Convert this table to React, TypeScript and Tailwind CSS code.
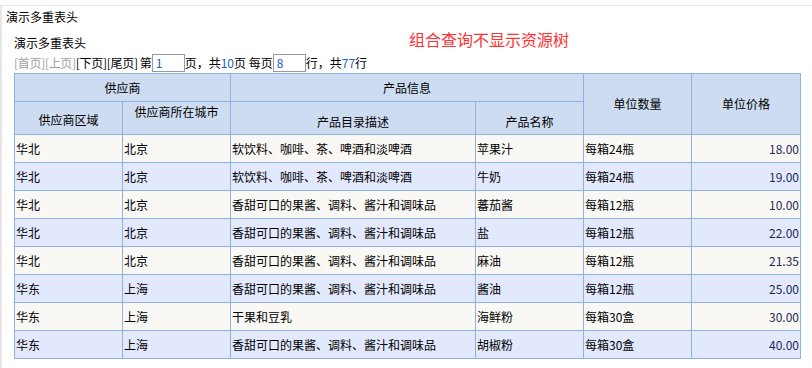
import React from 'react';

const rows = [
  ['华北', '北京', '软饮料、咖啡、茶、啤酒和淡啤酒', '苹果汁', '每箱24瓶', '18.00'],
  ['华北', '北京', '软饮料、咖啡、茶、啤酒和淡啤酒', '牛奶', '每箱24瓶', '19.00'],
  ['华北', '北京', '香甜可口的果酱、调料、酱汁和调味品', '蕃茄酱', '每箱12瓶', '10.00'],
  ['华北', '北京', '香甜可口的果酱、调料、酱汁和调味品', '盐', '每箱12瓶', '22.00'],
  ['华北', '北京', '香甜可口的果酱、调料、酱汁和调味品', '麻油', '每箱12瓶', '21.35'],
  ['华东', '上海', '香甜可口的果酱、调料、酱汁和调味品', '酱油', '每箱12瓶', '25.00'],
  ['华东', '上海', '干果和豆乳', '海鲜粉', '每箱30盒', '30.00'],
  ['华东', '上海', '香甜可口的果酱、调料、酱汁和调味品', '胡椒粉', '每箱30盒', '40.00'],
];

const th = 'border border-[#8db2e3] bg-[#cddcf0] font-normal text-center p-0';
const td = 'border border-[#8db2e3] px-[1px] py-0 h-[28px]';

const App = () => {
  return (
    <div
      className="w-[812px] h-[368px] bg-white text-[12px] text-black overflow-hidden"
      style={{ fontFamily: '"Noto Sans CJK SC", "Liberation Sans", sans-serif' }}
    >
      <div className="mt-[5px] h-[363px] border-t border-l-2 border-[#e6e6e6]">
        <div className="pl-[4px] pt-[3px] leading-[16px]">演示多重表头</div>
        <div className="relative pl-[12px]">
          <div className="pt-[10px] leading-[16px]">演示多重表头</div>
          <div className="absolute left-[407px] top-[3px] text-[16px] leading-[22px] text-[#ff3333]">
            组合查询不显示资源树
          </div>
          <div className="flex items-center h-[20px] mt-[2px] leading-[16px]">
            <span className="text-[#a0a0a0] tracking-[-0.3px]">[首页][上页]</span>
            <span className="tracking-[-0.3px]">[下页][尾页]</span>
            <span className="ml-[2px]">第</span>
            <span className="w-[33px] h-[18px] border border-[#9a9a9a] text-[#1f5fbf] pl-[3px] leading-[16px]">1</span>
            <span>页，共<span className="text-[#1f5fbf]">10</span>页 每页</span>
            <span className="w-[33px] h-[18px] border border-[#9a9a9a] text-[#1f5fbf] pl-[3px] leading-[16px]">8</span>
            <span>行，共<span className="text-[#1f5fbf]">77</span>行</span>
          </div>
          <table className="border-collapse table-fixed w-[786px]">
            <colgroup>
              <col className="w-[108px]" />
              <col className="w-[108px]" />
              <col className="w-[245px]" />
              <col className="w-[108px]" />
              <col className="w-[108px]" />
              <col className="w-[109px]" />
            </colgroup>
            <thead>
              <tr className="h-[28px]">
                <th colSpan={2} className={th}>供应商</th>
                <th colSpan={2} className={th}>产品信息</th>
                <th rowSpan={2} className={`${th} align-middle`}>单位数量</th>
                <th rowSpan={2} className={`${th} align-middle`}>单位价格</th>
              </tr>
              <tr className="h-[33px]">
                <th className={`${th} align-middle pt-[4px]`}>供应商区域</th>
                <th className={`${th} align-top pt-[1px]`}>供应商所在城市</th>
                <th className={`${th} align-middle pt-[8px]`}>产品目录描述</th>
                <th className={`${th} align-middle pt-[8px]`}>产品名称</th>
              </tr>
            </thead>
            <tbody>
              {rows.map((r, i) => (
                <tr key={i} className={i % 2 === 0 ? 'bg-[#f9f8f5]' : 'bg-[#e3e9fd]'}>
                  <td className={td}>{r[0]}</td>
                  <td className={td}>{r[1]}</td>
                  <td className={td}>{r[2]}</td>
                  <td className={td}>{r[3]}</td>
                  <td className={td}>{r[4]}</td>
                  <td className={`${td} text-right text-[#1c2a55]`}>{r[5]}</td>
                </tr>
              ))}
            </tbody>
          </table>
        </div>
      </div>
    </div>
  );
};

export default App;
